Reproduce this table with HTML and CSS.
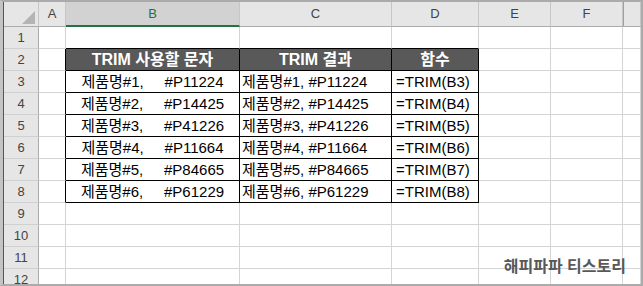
FILE: index.html
```html
<!DOCTYPE html>
<html lang="ko">
<head>
<meta charset="utf-8">
<title>TRIM</title>
<link rel="stylesheet" href="styles.css">
</head>
<body>
<div class="sheet">
  <div class="grid">
    <div class="c h corner"><span class="tri"></span></div>
    <div class="c h">A</div>
    <div class="c h sel">B</div>
    <div class="c h">C</div>
    <div class="c h">D</div>
    <div class="c h">E</div>
    <div class="c h">F</div>
    <div class="c h hlast"></div>

    <div class="c rh">1</div><div class="c"></div><div class="c tt"></div><div class="c tt"></div><div class="c tt"></div><div class="c"></div><div class="c"></div><div class="c"></div>

    <div class="c rh">2</div><div class="c tl"></div><div class="c t th">TRIM 사용할 문자</div><div class="c t th">TRIM 결과</div><div class="c t th">함수</div><div class="c"></div><div class="c"></div><div class="c"></div>

    <div class="c rh">3</div><div class="c tl"></div><div class="c t ctr">제품명#1,     #P11224</div><div class="c t lft">제품명#1, #P11224</div><div class="c t fn">=TRIM(B3)</div><div class="c"></div><div class="c"></div><div class="c"></div>

    <div class="c rh">4</div><div class="c tl"></div><div class="c t ctr">제품명#2,     #P14425</div><div class="c t lft">제품명#2, #P14425</div><div class="c t fn">=TRIM(B4)</div><div class="c"></div><div class="c"></div><div class="c"></div>

    <div class="c rh">5</div><div class="c tl"></div><div class="c t ctr">제품명#3,     #P41226</div><div class="c t lft">제품명#3, #P41226</div><div class="c t fn">=TRIM(B5)</div><div class="c"></div><div class="c"></div><div class="c"></div>

    <div class="c rh">6</div><div class="c tl"></div><div class="c t ctr">제품명#4,     #P11664</div><div class="c t lft">제품명#4, #P11664</div><div class="c t fn">=TRIM(B6)</div><div class="c"></div><div class="c"></div><div class="c"></div>

    <div class="c rh">7</div><div class="c tl"></div><div class="c t ctr">제품명#5,     #P84665</div><div class="c t lft">제품명#5, #P84665</div><div class="c t fn">=TRIM(B7)</div><div class="c"></div><div class="c"></div><div class="c"></div>

    <div class="c rh">8</div><div class="c tl"></div><div class="c t ctr">제품명#6,     #P61229</div><div class="c t lft">제품명#6, #P61229</div><div class="c t fn">=TRIM(B8)</div><div class="c"></div><div class="c"></div><div class="c"></div>

    <div class="c rh">9</div><div class="c"></div><div class="c"></div><div class="c"></div><div class="c"></div><div class="c"></div><div class="c"></div><div class="c"></div>
    <div class="c rh">10</div><div class="c"></div><div class="c"></div><div class="c"></div><div class="c"></div><div class="c"></div><div class="c"></div><div class="c"></div>
    <div class="c rh">11</div><div class="c"></div><div class="c"></div><div class="c"></div><div class="c"></div><div class="c"></div><div class="c"></div><div class="c"></div>
    <div class="c rh">12</div><div class="c"></div><div class="c"></div><div class="c"></div><div class="c"></div><div class="c"></div><div class="c"></div><div class="c"></div>
  </div>
  <div class="watermark">해피파파 티스토리</div>
</div>
</body>
</html>
```
FILE: styles.css
```css
html, body {
  margin: 0;
  padding: 0;
  background: #ffffff;
}

.sheet {
  position: relative;
  width: 643px;
  height: 286px;
  box-sizing: border-box;
  border-top: 2px solid #ababab;
  border-left: 3px solid #c4c4c4;
  border-right: 2px solid #ababab;
  border-bottom: 2px solid #ababab;
  overflow: hidden;
  font-family: "Liberation Sans", "Noto Sans CJK KR", sans-serif;
  color: #000;
}

.grid {
  display: grid;
  grid-template-columns: 35px 27px 174px 152px 87px 72px 72px 18px;
  grid-template-rows: 25px repeat(12, 22px);
  border-left: 1px solid #217346;
}

.c {
  box-sizing: border-box;
  border-right: 1px solid #d4d4d4;
  border-bottom: 1px solid #d4d4d4;
  white-space: pre;
  overflow: hidden;
  font-size: 15px;
  line-height: 21px;
}

.h {
  background: #e6e6e6;
  border-right-color: #c6c6c6;
  border-bottom-color: #ababab;
  color: #444;
  font-size: 13px;
  line-height: 24px;
  text-align: center;
}

.hlast {
  border-left: 1px solid #9f9f9f;
}

.sel {
  background: #d2d2d2;
  color: #217346;
  border-bottom: 2px solid #217346;
  line-height: 23px;
}

.corner {
  display: flex;
  justify-content: flex-end;
  align-items: flex-end;
  padding: 0 3px 2px 0;
}

.tri {
  width: 13px;
  height: 13px;
  background: #b4b4b4;
  clip-path: polygon(100% 0, 100% 100%, 0 100%);
}

.rh {
  background: #e6e6e6;
  border-right-color: #ababab;
  border-bottom-color: #d0d0d0;
  color: #444;
  font-size: 13px;
  text-align: center;
  line-height: 22px;
}

.tt {
  border-bottom-color: #000;
}

.tl {
  border-right-color: #000;
}

.t {
  border-right-color: #000;
  border-bottom-color: #000;
}

.th {
  background: #595959;
  color: #fff;
  font-weight: bold;
  font-size: 16px;
  text-align: center;
}

.ctr {
  text-align: center;
}

.lft {
  padding-left: 2px;
}

.fn {
  padding-left: 4px;
}

.watermark {
  position: absolute;
  right: 15px;
  bottom: 9px;
  font-family: "Noto Sans CJK KR", sans-serif;
  font-weight: bold;
  font-size: 16px;
  color: #595959;
  line-height: 20px;
}
```
